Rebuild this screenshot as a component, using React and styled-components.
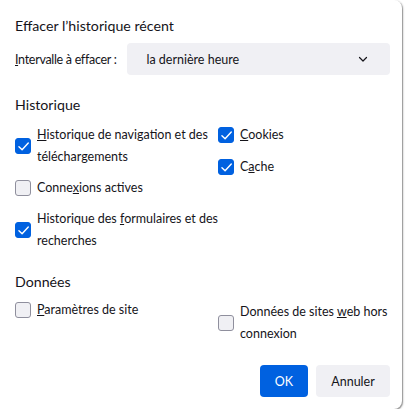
import React from 'react';
import styled, { createGlobalStyle } from 'styled-components';

const GlobalStyle = createGlobalStyle`
  html, body {
    margin: 0;
    padding: 0;
    background: #ffffff;
  }
  body {
    font-family: Lato, "Noto Sans", sans-serif;
    color: #15141a;
  }
`;

const Dialog = styled.div`
  box-sizing: border-box;
  width: 402px;
  height: 409px;
  background: #ffffff;
  border-radius: 0 8px 8px 0;
  box-shadow: 1px 1px 2px rgba(0, 0, 0, 0.35), 1px 1px 0 rgba(0, 0, 0, 0.15);
  padding: 16px 12px 12px 15px;
  display: flex;
  flex-direction: column;
`;

const Title = styled.h1`
  margin: 0;
  font-size: 14.2px;
  font-weight: 400;
  line-height: 20px;
`;

const RangeRow = styled.div`
  margin-top: 7px;
  display: flex;
  align-items: center;
  gap: 11px;
  font-size: 12.5px;
`;

const RangeLabel = styled.span`
  letter-spacing: -0.3px;
`;

const Select = styled.div`
  flex: 1;
  height: 32px;
  background: #f0f0f4;
  border-radius: 4px;
  display: flex;
  align-items: center;
  justify-content: space-between;
  padding: 0 21px 0 19px;
`;

const SectionTitle = styled.h2`
  margin: ${(p) => p.$top}px 0 0;
  font-size: 14.2px;
  font-weight: 400;
  line-height: 20px;
`;

const Grid = styled.div`
  margin-top: ${(p) => p.$top}px;
  display: grid;
  grid-template-columns: 203px 1fr;
  align-items: start;
`;

const Column = styled.div`
  display: flex;
  flex-direction: column;
  gap: ${(p) => p.$gap || 0}px;
  padding-top: ${(p) => p.$shift || 0}px;
`;

const Item = styled.label`
  display: flex;
  align-items: center;
  gap: 6px;
  font-size: 12.5px;
  line-height: 22px;
`;

const Box = styled.span`
  flex: none;
  box-sizing: border-box;
  width: 16px;
  height: 16px;
  border-radius: 3px;
  background: ${(p) => (p.$checked ? '#0061e0' : '#f0f0f4')};
  border: 1px solid ${(p) => (p.$checked ? '#0061e0' : '#8f8f9d')};
  display: flex;
  align-items: center;
  justify-content: center;
`;

const Footer = styled.div`
  margin-top: auto;
  display: flex;
  justify-content: flex-end;
  gap: 8px;
`;

const Button = styled.button`
  height: 32px;
  padding: 0;
  width: ${(p) => (p.$primary ? 48 : 74)}px;
  border: none;
  border-radius: 4px;
  font-family: inherit;
  font-size: 12.5px;
  font-weight: 400;
  background: ${(p) => (p.$primary ? '#0061e0' : '#f0f0f4')};
  color: ${(p) => (p.$primary ? '#ffffff' : '#15141a')};
`;

const Check = ({ checked }) => (
  <Box $checked={checked}>
    {checked && (
      <svg width="13" height="13" viewBox="0 0 12 12">
        <path d="M1.8 6.2 L4.7 9 L10.4 2.8" fill="none" stroke="#fff" strokeWidth="1.3" strokeLinecap="round" strokeLinejoin="round" />
      </svg>
    )}
  </Box>
);

export default function App() {
  return (
    <>
      <GlobalStyle />
      <Dialog>
        <Title>Effacer l’historique récent</Title>
        <RangeRow>
          <RangeLabel><u>I</u>ntervalle à effacer :</RangeLabel>
          <Select>
            <span>la dernière heure</span>
            <svg width="12" height="12" viewBox="0 0 12 12">
              <path d="M2.5 4.5 L6 8 L9.5 4.5" fill="none" stroke="#15141a" strokeWidth="1.2" strokeLinecap="round" strokeLinejoin="round" />
            </svg>
          </Select>
        </RangeRow>

        <SectionTitle $top={20}>Historique</SectionTitle>
        <Grid $top={9}>
          <Column $gap={9}>
            <Item>
              <Check checked />
              <span><u>H</u>istorique de navigation et des téléchargements</span>
            </Item>
            <Item>
              <Check />
              <span>Conne<u>x</u>ions actives</span>
            </Item>
            <Item>
              <Check checked />
              <span>Historique des <u>f</u>ormulaires et des recherches</span>
            </Item>
          </Column>
          <Column $gap={10}>
            <Item>
              <Check checked />
              <span><u>C</u>ookies</span>
            </Item>
            <Item>
              <Check checked />
              <span>C<u>a</u>che</span>
            </Item>
          </Column>
        </Grid>

        <SectionTitle $top={20}>Données</SectionTitle>
        <Grid $top={7}>
          <Column>
            <Item>
              <Check />
              <span><u>P</u>aramètres de site</span>
            </Item>
          </Column>
          <Column $shift={2}>
            <Item>
              <Check />
              <span>Données de sites <u>w</u>eb hors connexion</span>
            </Item>
          </Column>
        </Grid>

        <Footer>
          <Button $primary>OK</Button>
          <Button>Annuler</Button>
        </Footer>
      </Dialog>
    </>
  );
}
